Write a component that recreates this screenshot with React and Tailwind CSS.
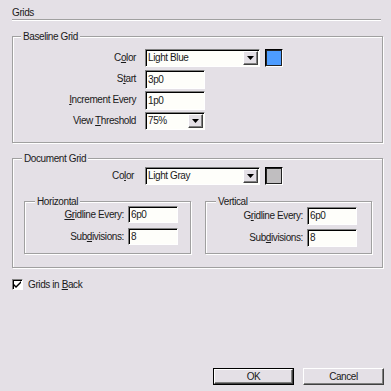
import React from "react";

const SUNKEN =
  "border border-t-[#808080] border-l-[#808080] border-b-white border-r-white shadow-[inset_1px_1px_0_#000]";
const RAISED =
  "border border-t-white border-l-white border-b-[#404040] border-r-[#404040] shadow-[inset_-1px_-1px_0_#808080] bg-[#e4e0e6]";

function Group({ label, className, labelPos, children }) {
  return (
    <div
      className={
        "relative border border-[#a0a0a0] shadow-[1px_1px_0_#fff,inset_1px_1px_0_#fff] " +
        className
      }
    >
      <span
        className={
          "absolute -top-[7px] px-[2px] bg-[#e4e0e6] leading-[13px] " +
          (labelPos || "left-[8px]")
        }
      >
        {label}
      </span>
      {children}
    </div>
  );
}

function Field({ value, className }) {
  return (
    <div
      className={
        SUNKEN +
        " bg-[#fefefa] flex items-center pl-[2px] leading-none " +
        className
      }
    >
      {value}
    </div>
  );
}

function Arrow() {
  return (
    <svg width="7" height="4" viewBox="0 0 7 4">
      <path d="M0 0h7L3.5 4z" fill="#000" />
    </svg>
  );
}

function Select({ value, className }) {
  return (
    <div
      className={
        SUNKEN + " bg-[#fefefa] flex items-stretch leading-none " + className
      }
    >
      <div className="flex-1 flex items-center pl-[2px]">{value}</div>
      <div
        className={
          RAISED + " w-[15px] m-[1px] flex items-center justify-center"
        }
      >
        <Arrow />
      </div>
    </div>
  );
}

function Label({ children, className }) {
  return (
    <div
      className={
        "flex items-center justify-end leading-none whitespace-nowrap " +
        (className || "")
      }
    >
      <span>{children}</span>
    </div>
  );
}

function Swatch({ color, className }) {
  return (
    <div
      className={
        "w-[18px] h-[18px] border border-t-[#000] border-l-[#000] border-b-white border-r-white " +
        (className || "")
      }
    >
      <div className={"w-full h-full border border-[#222] " + color} />
    </div>
  );
}

export default function App() {
  return (
    <div className="w-[391px] h-[391px] bg-[#e4e0e6] text-[10px] tracking-[-0.4px] text-[#1a1a1a] font-['Liberation_Sans',Arial,sans-serif] flex flex-col">
      <div className="mt-[6px] mx-[12px] leading-[13px]">Grids</div>
      <div className="mx-[12px] mr-[10px] h-[1px] bg-[#a0a0a0] shadow-[0_1px_0_#fff]" />

      <Group label="Baseline Grid" className="mt-[16px] ml-[12px] w-[371px] h-[107px] pt-[12px]">
        <div className="grid grid-cols-[126px_auto] gap-x-[6px] gap-y-[3px] auto-rows-[18px]">
          <Label className="pr-[3px]">
            C<span className="underline">o</span>lor
          </Label>
          <div className="flex items-center gap-[5px]">
            <Select value="Light Blue" className="w-[115px] h-[18px]" />
            <Swatch color="bg-[#4d9cff]" />
          </div>
          <Label className="pr-[3px]">
            S<span className="underline">t</span>art
          </Label>
          <Field value="3p0" className="w-[60px] h-[19px]" />
          <Label className="pr-[3px]">
            <span className="underline">I</span>ncrement Every
          </Label>
          <Field value="1p0" className="w-[60px] h-[19px]" />
          <Label className="pr-[3px]">
            View <span className="underline">T</span>hreshold
          </Label>
          <Select value="75%" className="w-[60px] h-[18px]" />
        </div>
      </Group>

      <Group label="Document Grid" className="mt-[15px] ml-[12px] w-[371px] h-[110px] pt-[8px]" labelPos="left-[9px]">
        <div className="grid grid-cols-[126px_auto] gap-x-[6px] auto-rows-[18px]">
          <Label className="pr-[5px]">
            Co<span className="underline">l</span>or
          </Label>
          <div className="flex items-center gap-[5px]">
            <Select value="Light Gray" className="w-[115px] h-[18px]" />
            <Swatch color="bg-[#c0bec0]" />
          </div>
        </div>
        <div className="flex mt-[16px] ml-[11px] gap-[14px]">
          <Group label="Horizontal" className="w-[167px] h-[53px] pt-[4px]" labelPos="left-[10px]">
            <div className="grid grid-cols-[99px_auto] gap-x-[4px] gap-y-[5px] auto-rows-[17px]">
              <Label>
                <span className="underline">Gr</span>idline Every:
              </Label>
              <Field value="6p0" className="w-[50px] h-[17px]" />
              <Label>
                Sub<span className="underline">d</span>ivisions:
              </Label>
              <Field value="8" className="w-[50px] h-[17px]" />
            </div>
          </Group>
          <Group label="Vertical" className="w-[167px] h-[53px] pt-[5px]" labelPos="left-[10px]">
            <div className="grid grid-cols-[97px_auto] gap-x-[4px] gap-y-[4px] auto-rows-[18px]">
              <Label>
                G<span className="underline">r</span>idline Every:
              </Label>
              <Field value="6p0" className="w-[50px] h-[18px]" />
              <Label>
                Sub<span className="underline">d</span>ivisions:
              </Label>
              <Field value="8" className="w-[50px] h-[18px]" />
            </div>
          </Group>
        </div>
      </Group>

      <div className="mt-[11px] ml-[12px] flex items-center gap-[5px] leading-none">
        <div
          className={
            SUNKEN +
            " w-[11px] h-[11px] bg-white flex items-center justify-center"
          }
        >
          <svg width="7" height="7" viewBox="0 0 7 7">
            <path d="M0 3l2 2 5-5v2L2 7 0 5z" fill="#000" />
          </svg>
        </div>
        <span>
          Grids in <span className="underline">B</span>ack
        </span>
      </div>

      <div className="flex-1" />

      <div className="flex justify-end gap-[9px] pr-[7px] pb-[6px]">
        <div className="w-[81px] h-[17px] border border-black">
          <div
            className={
              RAISED + " w-full h-full flex items-center justify-center leading-none"
            }
          >
            OK
          </div>
        </div>
        <div
          className={
            RAISED +
            " w-[81px] h-[17px] flex items-center justify-center leading-none"
          }
        >
          Cancel
        </div>
      </div>
    </div>
  );
}
